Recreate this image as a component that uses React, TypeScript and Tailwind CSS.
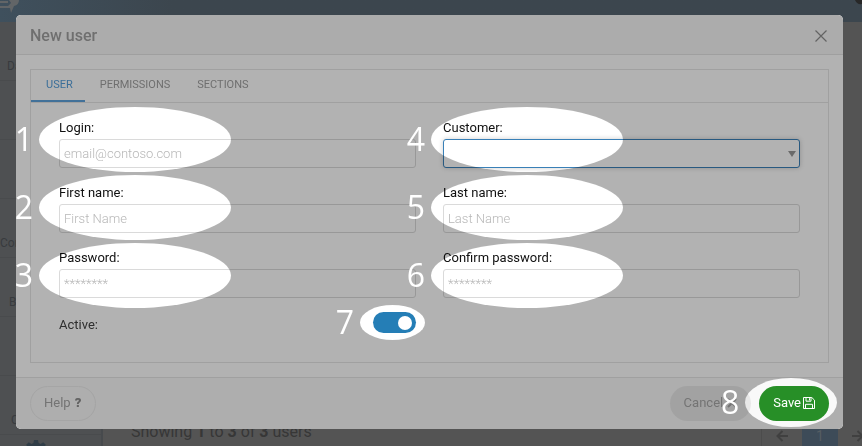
import React from "react";

const sides = {
  left: "-left-5 h-[65px] w-48",
  right: "-left-3 h-[65px] w-48",
};

/* Lights up an ellipse of the dimmed dialog and numbers it. */
function Marker({ n, place }: { n: number; place: string }) {
  return (
    <span className={`pointer-events-none absolute ${place}`}>
      <span className="absolute inset-0 z-20 rounded-[50%] bg-[#4d4d4d] mix-blend-color-dodge" />
      <span className="absolute inset-y-0 right-full z-30 mr-1.5 flex items-center pb-0.5 font-['Open_Sans','Noto_Sans',sans-serif] text-[32px] leading-8 font-normal text-white">
        {n}
      </span>
    </span>
  );
}

type FieldProps = {
  id: string;
  label: string;
  n: number;
  side: keyof typeof sides;
  top: string;
  children: React.ReactNode;
};

function Field({ id, label, n, side, top, children }: FieldProps) {
  return (
    <div className="relative flex flex-col gap-[3px]">
      <label htmlFor={id} className="text-[13px] leading-[17px] text-[#111]">
        {label}
      </label>
      {children}
      <Marker n={n} place={`${sides[side]} ${top}`} />
    </div>
  );
}

const box =
  "h-[29px] w-full rounded-[3px] border border-[#dadada] bg-white px-1 text-[13px] font-light text-[#333] outline-none placeholder:text-[#b8b8b8]";

const tab = "pr-3 pl-[15px]";

function Floppy() {
  return (
    <svg viewBox="0 0 12 12" className="size-3" fill="none" stroke="currentColor" strokeWidth="1">
      <path d="M.5.5h8.300L11.500 3.200v8.300H.5z" strokeLinejoin="round" />
      <path d="M2.500 11.500v-4.200h7v4.200M3 .5v3.700h5V.5" />
      <path d="M6.500 1.200v2.200" />
    </svg>
  );
}

function Gear() {
  return (
    <svg viewBox="0 0 24 24" className="size-6 shrink-0" fill="#303d47">
      <path d="M10 1h4l.6 3 2 .9L19.200 3.200l2.600 2.600-1.600 2.600.8 2 3 .6v3l-3 .6-.8 2 1.600 2.600-2.600 2.600-2.600-1.600-2 .8-.6 3h-4l-.6-3-2-.8-2.600 1.600-2.600-2.600 1.600-2.600-.8-2-3-.6v-3l3-.6.8-2-1.600-2.600 2.600-2.600L7.400 4.900l2-.9z" />
    </svg>
  );
}

const menu = [
  { text: "Da", pad: "pl-[7px]" },
  { text: "", pad: "" },
  { text: "", pad: "" },
  { text: "Con", pad: "pl-0" },
  { text: "B", pad: "pl-[9px]" },
  { text: "", pad: "" },
  { text: "C", pad: "pl-[11px]" },
];

function Page() {
  return (
    <div className="flex h-full flex-col" aria-hidden="true">
      <header className="flex h-[22px] shrink-0 items-start justify-between bg-linear-to-r from-[#3f505d] to-[#3c464e] to-20%">
        <svg viewBox="0 0 20 13" className="h-[13px] w-5" fill="#626567">
          <path d="M0 1h8v2H0zM9 0h10q0 5-5 6l-3 7-1-5H0V6h8l3-3z" />
        </svg>
        <svg viewBox="0 0 8 5" className="h-[5px] w-2" fill="#282828">
          <path d="M1 0h7v4Q3 5 1 0z" />
        </svg>
      </header>
      <div className="flex min-h-0 flex-1">
        <aside className="w-[103px] shrink-0 overflow-hidden border-r-2 border-[#474a4d] bg-[#4e5052] text-[12px] leading-4 text-[#383b3e]">
          {menu.map((m, i) => (
            <div key={i} className={`flex h-[59px] items-end border-b border-[#494b4d] pb-1.5 ${m.pad}`}>
              {m.text}
            </div>
          ))}
          <div className="flex pt-1 pl-6">
            <Gear />
          </div>
        </aside>
        <main className="flex min-w-0 flex-1 items-end justify-between overflow-hidden bg-[#545454] pl-7 text-[#373737]">
          <p className="text-[16px] leading-7">
            Showing <b>1</b> to <b>3</b> of <b>3</b> users
          </p>
          <div className="-mr-4 flex h-7 items-stretch border-l border-[#4c4c4c] text-[14px]">
            {["left", "1", "right"].map((k) =>
              k === "1" ? (
                <span key={k} className="flex w-9 items-start justify-center bg-[#3d4b58] pt-2 leading-5 text-[#565d63]">
                  1
                </span>
              ) : (
                <span key={k} className="flex w-10 items-end justify-center pb-1">
                  <svg
                    viewBox="0 0 12 12"
                    className={k === "right" ? "size-3 rotate-180" : "size-3"}
                    fill="none"
                    stroke="#404040"
                    strokeWidth="2"
                  >
                    <path d="M12 6H2M6.500 1 1.500 6l5 5" />
                  </svg>
                </span>
              ),
            )}
          </div>
        </main>
      </div>
    </div>
  );
}

export default function App() {
  return (
    <div className="relative h-screen overflow-hidden bg-[#545454] font-[Roboto,'Liberation_Sans',sans-serif] text-[13px]">
      <Page />
      <div className="absolute inset-0 pt-[15px] pr-[19px] pl-4">
        <div role="dialog" aria-labelledby="title" className="relative isolate rounded-[5px] bg-white">
          <div className="pointer-events-none absolute inset-0 z-10 rounded-[5px] bg-black/30" />

          <div className="flex h-10 items-center justify-between rounded-t-[5px] border-b border-[#e4e4e4] bg-[#f7f7f7] pt-0.5 pr-4 pl-3.5">
            <h1 id="title" className="text-[16px] leading-5 font-medium text-[#a0a0a0]">
              New user
            </h1>
            <button aria-label="Close" className="text-[#8f8f8f]">
              <svg viewBox="0 0 12 12" className="size-3" fill="none" stroke="currentColor" strokeWidth="1.200">
                <path d="m.5.5 11 11M11.500.5l-11 11" />
              </svg>
            </button>
          </div>

          <form className="p-3.5">
            <div className="border border-[#e6e6e6]">
              <div role="tablist" className="flex h-[33px] border-b border-[#e6e6e6] pb-px text-[11px] text-[#a0a0a0]">
                <button
                  type="button"
                  role="tab"
                  aria-selected="true"
                  className={`-mb-px border-b-2 border-[#5fa3dc] pt-px text-[#57a0dc] ${tab}`}
                >
                  USER
                </button>
                <button type="button" role="tab" aria-selected="false" className={tab}>
                  PERMISSIONS
                </button>
                <button type="button" role="tab" aria-selected="false" className={tab}>
                  SECTIONS
                </button>
              </div>

              <div className="px-7 pt-4 pb-[29px]">
                <div className="grid grid-cols-2 gap-x-[27px] gap-y-4">
                  <Field id="login" label="Login:" n={1} side="left" top="-top-3">
                    <input id="login" type="email" placeholder="email@contoso.com" className={box} />
                  </Field>
                  <Field id="customer" label="Customer:" n={4} side="right" top="-top-3">
                    <div className="relative flex">
                      <select
                        id="customer"
                        className="h-[29px] w-full appearance-none rounded-[3px] border border-[#3a80b8] bg-white px-1 shadow-[0_0_5px_rgba(0,0,0,0.2)] outline-none"
                      >
                        <option></option>
                      </select>
                      <svg viewBox="0 0 8 6" className="pointer-events-none absolute top-3 right-1 h-1.5 w-2" fill="#999">
                        <path d="M0 0h8L4 6z" />
                      </svg>
                    </div>
                  </Field>
                  <Field id="first" label="First name:" n={2} side="left" top="-top-[9px]">
                    <input id="first" type="text" placeholder="First Name" className={box} />
                  </Field>
                  <Field id="last" label="Last name:" n={5} side="right" top="-top-[9px]">
                    <input id="last" type="text" placeholder="Last Name" className={box} />
                  </Field>
                  <Field id="password" label="Password:" n={3} side="left" top="-top-1.5">
                    <input id="password" type="password" placeholder="********" className={box} />
                  </Field>
                  <Field id="confirm" label="Confirm password:" n={6} side="right" top="-top-1.5">
                    <input id="confirm" type="password" placeholder="********" className={box} />
                  </Field>
                </div>

                <div className="mt-3.5 grid grid-cols-2 gap-x-[27px]">
                  <div className="flex items-end justify-between">
                    <label htmlFor="active" className="leading-[17px] text-[#444]">
                      Active:
                    </label>
                    <div className="relative flex">
                      <input
                        id="active"
                        type="checkbox"
                        role="switch"
                        defaultChecked
                        className="flex h-[21px] w-[43px] appearance-none items-center justify-end rounded-full bg-[#267fb7] px-1 before:size-3.5 before:rounded-full before:bg-white"
                      />
                      <Marker n={7} place="-top-[7px] -left-[13px] h-[35px] w-[65px]" />
                    </div>
                  </div>
                </div>
              </div>
            </div>
          </form>

          <div className="flex items-center justify-between rounded-b-[5px] border-t border-[#e6e6e6] bg-[#f9f9f9] px-3.5 py-2">
            <button className="h-[35px] rounded-full border border-[#ececec] px-[13px] pb-0.5 text-[#a6a6a6]">
              Help <b className="ml-px font-black text-[#8c8c8c]">?</b>
            </button>
            <div className="flex gap-2">
              <button className="flex h-[35px] items-center gap-1 rounded-full bg-[#e9e9e9] px-3.5 pb-0.5 text-[#a6a6a6]">
                Cancel
                <svg viewBox="0 0 10 10" className="size-2.5" fill="none" stroke="currentColor" strokeWidth="2">
                  <path d="m1 1 8 8M9 1 1 9" />
                </svg>
              </button>
              <button className="relative flex h-[35px] items-center gap-0.5 rounded-full bg-[#289028] px-3.5 pb-0.5 text-white">
                Save
                <Floppy />
                <Marker n={8} place="-top-2 -right-2 -bottom-1.5 -left-3.5" />
              </button>
            </div>
          </div>
        </div>
      </div>
    </div>
  );
}
